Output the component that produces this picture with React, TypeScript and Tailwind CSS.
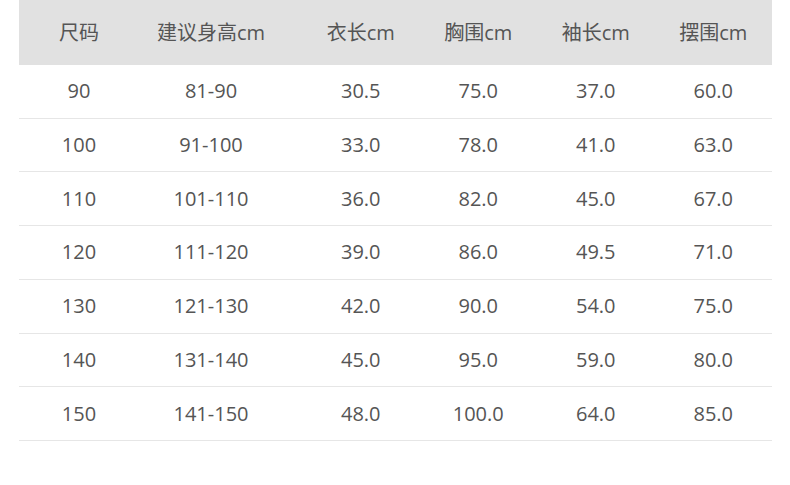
import React from "react";

const columns = [
  { label: "尺码", cell: "pr-[6px]" },
  { label: "建议身高cm", cell: "pr-[9px]" },
  { label: "衣长cm", cell: "pl-[16px]" },
  { label: "胸围cm", cell: "" },
  { label: "袖长cm", cell: "" },
  { label: "摆围cm", cell: "" },
];

const rows = [
  ["90", "81-90", "30.5", "75.0", "37.0", "60.0"],
  ["100", "91-100", "33.0", "78.0", "41.0", "63.0"],
  ["110", "101-110", "36.0", "82.0", "45.0", "67.0"],
  ["120", "111-120", "39.0", "86.0", "49.5", "71.0"],
  ["130", "121-130", "42.0", "90.0", "54.0", "75.0"],
  ["140", "131-140", "45.0", "95.0", "59.0", "80.0"],
  ["150", "141-150", "48.0", "100.0", "64.0", "85.0"],
];

const grid = "grid grid-cols-[126px_141px_133.5px_117.5px_117.5px_117.5px]";

export default function App() {
  return (
    <div
      className="w-[790px] h-[485px] bg-white pl-[19px] pr-[18px] text-[#555555] text-[20px]"
      style={{ fontFamily: '"Open Sans", "Noto Sans CJK SC", sans-serif' }}
    >
      <div className={`${grid} h-[65px] bg-[#e1e1e1] items-center`}>
        {columns.map((c) => (
          <div key={c.label} className={`text-center ${c.cell}`}>
            {c.label}
          </div>
        ))}
      </div>
      {rows.map((r) => (
        <div key={r[0]} className={`${grid} h-[53.71px] border-b border-[#e6e6e6] items-center`}>
          {r.map((v, i) => (
            <div key={i} className={`text-center ${columns[i].cell}`}>
              {v}
            </div>
          ))}
        </div>
      ))}
    </div>
  );
}
